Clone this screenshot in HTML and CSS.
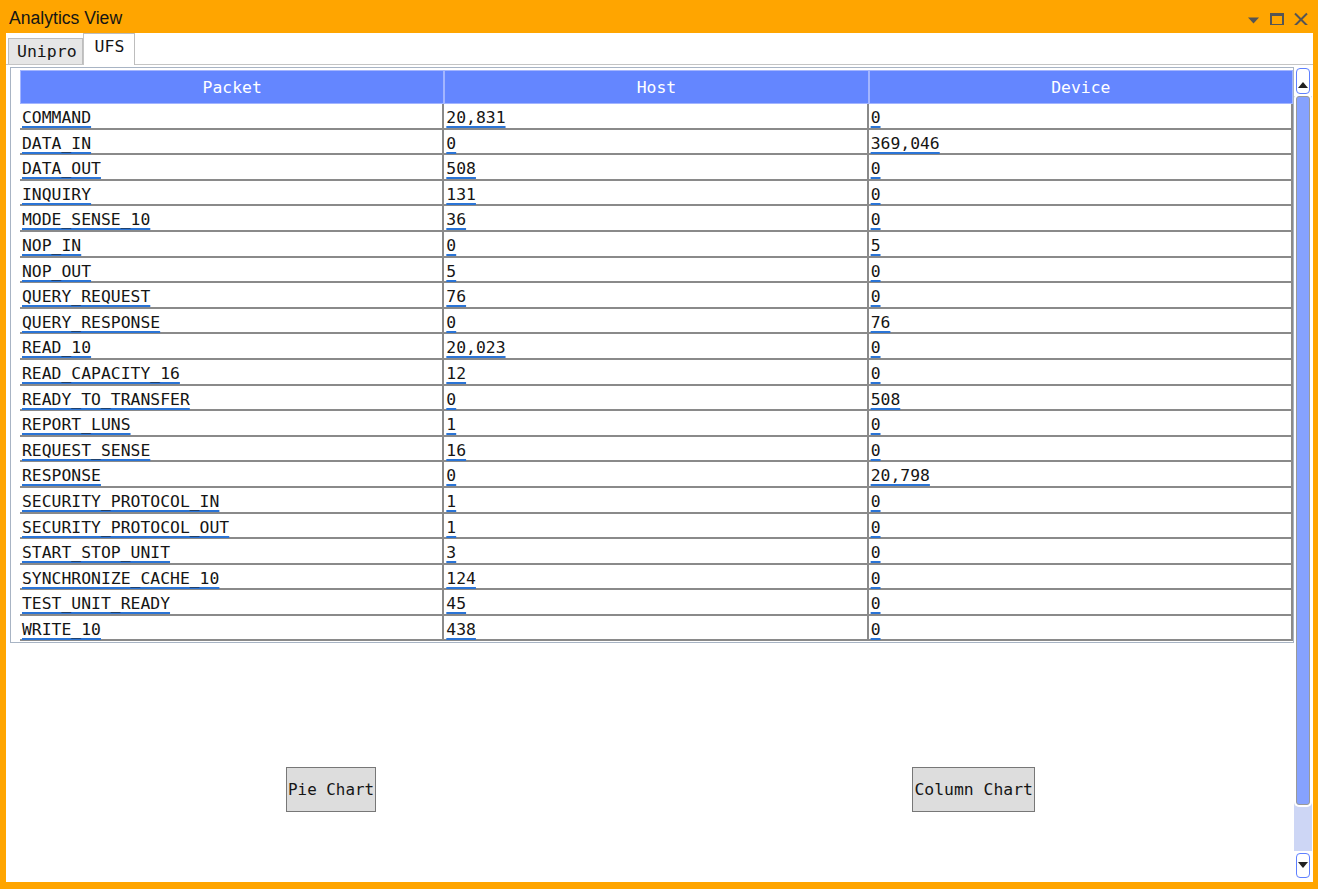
FILE: index.html
```html
<!DOCTYPE html>
<html lang="en">
<head>
    <meta charset="UTF-8">
    <title>Analytics View</title>
    <link rel="stylesheet" href="styles.css">
</head>
<body>
    <div class="window">
        <div class="titlebar">
            <span class="title">Analytics View</span>
            <div class="controls">
                <svg width="16" height="16" viewBox="0 0 16 16"><path d="M3 8.5h11l-5.5 6z" fill="#555"/></svg>
                <svg width="16" height="16" viewBox="0 0 16 16"><path d="M1 4h14v13H1z M3 7v8h10V7z" fill="#555" fill-rule="evenodd"/></svg>
                <svg width="16" height="16" viewBox="0 0 16 16"><path d="M2 4.5l12 12M14 4.5l-12 12" stroke="#555" stroke-width="2" fill="none"/></svg>
            </div>
        </div>

        <div class="pane">
            <div class="tabs">
                <div class="tab">Unipro</div>
                <div class="tab active">UFS</div>
            </div>

            <div class="view">
                <div class="scroll-area">
                    <div class="grid-box">
                        <table class="grid">
                            <thead>
                                <tr><th>Packet</th><th>Host</th><th>Device</th></tr>
                            </thead>
                            <tbody>
                                <tr><td><a href="#">COMMAND</a></td><td><a href="#">20,831</a></td><td><a href="#">0</a></td></tr>
                                <tr><td><a href="#">DATA_IN</a></td><td><a href="#">0</a></td><td><a href="#">369,046</a></td></tr>
                                <tr><td><a href="#">DATA_OUT</a></td><td><a href="#">508</a></td><td><a href="#">0</a></td></tr>
                                <tr><td><a href="#">INQUIRY</a></td><td><a href="#">131</a></td><td><a href="#">0</a></td></tr>
                                <tr><td><a href="#">MODE_SENSE_10</a></td><td><a href="#">36</a></td><td><a href="#">0</a></td></tr>
                                <tr><td><a href="#">NOP_IN</a></td><td><a href="#">0</a></td><td><a href="#">5</a></td></tr>
                                <tr><td><a href="#">NOP_OUT</a></td><td><a href="#">5</a></td><td><a href="#">0</a></td></tr>
                                <tr><td><a href="#">QUERY_REQUEST</a></td><td><a href="#">76</a></td><td><a href="#">0</a></td></tr>
                                <tr><td><a href="#">QUERY_RESPONSE</a></td><td><a href="#">0</a></td><td><a href="#">76</a></td></tr>
                                <tr><td><a href="#">READ_10</a></td><td><a href="#">20,023</a></td><td><a href="#">0</a></td></tr>
                                <tr><td><a href="#">READ_CAPACITY_16</a></td><td><a href="#">12</a></td><td><a href="#">0</a></td></tr>
                                <tr><td><a href="#">READY_TO_TRANSFER</a></td><td><a href="#">0</a></td><td><a href="#">508</a></td></tr>
                                <tr><td><a href="#">REPORT_LUNS</a></td><td><a href="#">1</a></td><td><a href="#">0</a></td></tr>
                                <tr><td><a href="#">REQUEST_SENSE</a></td><td><a href="#">16</a></td><td><a href="#">0</a></td></tr>
                                <tr><td><a href="#">RESPONSE</a></td><td><a href="#">0</a></td><td><a href="#">20,798</a></td></tr>
                                <tr><td><a href="#">SECURITY_PROTOCOL_IN</a></td><td><a href="#">1</a></td><td><a href="#">0</a></td></tr>
                                <tr><td><a href="#">SECURITY_PROTOCOL_OUT</a></td><td><a href="#">1</a></td><td><a href="#">0</a></td></tr>
                                <tr><td><a href="#">START_STOP_UNIT</a></td><td><a href="#">3</a></td><td><a href="#">0</a></td></tr>
                                <tr><td><a href="#">SYNCHRONIZE_CACHE_10</a></td><td><a href="#">124</a></td><td><a href="#">0</a></td></tr>
                                <tr><td><a href="#">TEST_UNIT_READY</a></td><td><a href="#">45</a></td><td><a href="#">0</a></td></tr>
                                <tr><td><a href="#">WRITE_10</a></td><td><a href="#">438</a></td><td><a href="#">0</a></td></tr>
                            </tbody>
                        </table>
                    </div>

                    <div class="charts">
                        <button type="button" class="chart-btn pie">Pie Chart</button>
                        <button type="button" class="chart-btn column">Column Chart</button>
                    </div>
                </div>

                <div class="scrollbar">
                    <div class="sb-btn up"></div>
                    <div class="sb-track"><div class="sb-thumb"></div></div>
                    <div class="sb-btn down"></div>
                </div>
            </div>
        </div>
    </div>
</body>
</html>
```

FILE: styles.css
```css
body {
    margin: 0;
    padding: 0;
    background-color: #ffa500;
    font-family: "DejaVu Sans Mono", monospace;
}

.window {
    height: 889px;
    display: flex;
    flex-direction: column;
    box-sizing: border-box;
    padding: 0 5px 7px 6px;
    background-color: #ffa500;
}

/* title bar */
.titlebar {
    height: 33px;
    flex: none;
    display: flex;
    align-items: center;
    padding: 0 4px 0 3px;
}

.title {
    font-family: "Liberation Sans", Arial, sans-serif;
    font-size: 17.6px;
    color: #151515;
    padding-top: 4px;
}

.controls {
    margin-left: auto;
    display: flex;
    gap: 8px;
}

.controls svg {
    display: block;
}

/* white pane under the title */
.pane {
    flex: 1;
    display: flex;
    flex-direction: column;
    background-color: #fff;
    min-height: 0;
}

.tabs {
    height: 31px;
    flex: none;
    display: flex;
    align-items: flex-end;
    padding-left: 2px;
    border-bottom: 1px solid #c4c4c4;
}

.tab {
    font-size: 16.5px;
    color: #151515;
    box-sizing: border-box;
    height: 26px;
    padding: 3px 5px 0 8px;
    background-color: #e6e6e6;
    border: 1px solid #bdbdbd;
    border-bottom: none;
}

.tab.active {
    height: 32px;
    margin-bottom: -1px;
    padding: 3px 10px 0 11px;
    background-color: #fff;
    border-left: 1px solid #c4c4c4;
}

.view {
    flex: 1;
    display: flex;
    padding: 2px 1px 2px 4px;
    min-height: 0;
}

.scroll-area {
    flex: 1;
    display: flex;
    flex-direction: column;
}

/* data grid */
.grid-box {
    border: 1px solid #a8b4c4;
    padding: 2px 0 1px 9px;
}

.grid {
    width: 100%;
    table-layout: fixed;
    border-collapse: separate;
    border-spacing: 0;
    font-size: 16.4px;
}

.grid th {
    height: 34px;
    box-sizing: border-box;
    padding: 0;
    font-weight: normal;
    color: #fff;
    background-color: #6486ff;
    border: 1px solid #a3b5ff;
    text-align: center;
}

.grid td {
    padding: 4.1px 2px 0.5px 2px;
    line-height: 19px;
    border-right: 2px solid #8a8a8a;
    border-bottom: 2px solid #8a8a8a;
    white-space: nowrap;
}

.grid td a {
    color: #151515;
    text-decoration: underline;
    text-decoration-color: #2a74d6;
    text-decoration-thickness: 2px;
    text-decoration-skip-ink: none;
    text-underline-offset: 3px;
}

/* chart buttons */
.charts {
    display: grid;
    grid-template-columns: 1fr 1fr;
    justify-items: center;
    margin-top: 124px;
}

.chart-btn {
    height: 45px;
    box-sizing: border-box;
    padding: 0 2px;
    font-family: "DejaVu Sans Mono", monospace;
    font-size: 16.4px;
    color: #151515;
    text-align: left;
    white-space: nowrap;
    overflow: hidden;
    background-color: #dddddd;
    border: 1px solid #777;
    border-radius: 0;
}

.chart-btn.pie {
    width: 90px;
    padding: 0 1px;
    font-size: 15.9px;
}

.chart-btn.column {
    width: 123px;
}

/* vertical scrollbar */
.scrollbar {
    width: 18px;
    flex: none;
    display: flex;
    flex-direction: column;
    padding-bottom: 2px;
}

.sb-btn {
    height: 26px;
    margin: 1px 2px 0 2px;
    box-sizing: border-box;
    border: 1px solid #5f80ff;
    border-radius: 4px;
    background-color: #fff;
    display: flex;
    justify-content: center;
}

.sb-btn::after {
    content: "";
    width: 0;
    height: 0;
    border-left: 5px solid transparent;
    border-right: 5px solid transparent;
}

.sb-btn.up {
    align-items: flex-end;
    padding-bottom: 5px;
}

.sb-btn.up::after {
    border-bottom: 6px solid #222;
}

.sb-btn.down {
    height: 25px;
    margin-top: 2px;
    align-items: flex-start;
    padding-top: 8px;
}

.sb-btn.down::after {
    border-top: 6px solid #222;
}

.sb-track {
    flex: 1;
    margin-top: 2px;
    display: flex;
    flex-direction: column;
    background-color: #cdd6f5;
}

.sb-thumb {
    height: 709px;
    box-sizing: border-box;
    margin: 0 2px;
    background-color: #86a2ff;
    border: 1px solid #9a9a9a;
    border-radius: 3px;
    box-shadow: 0 0 0 2px #fff;
}
```
